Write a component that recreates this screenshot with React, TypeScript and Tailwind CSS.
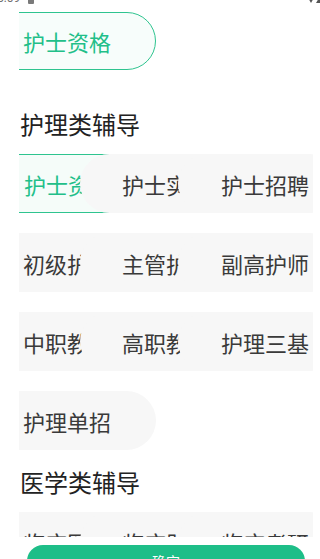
import React from "react";

const FONT = { fontFamily: '"Noto Sans CJK SC", "Noto Sans", sans-serif' };

type CellProps = { text: string; pos: 1 | 2 | 3; selected?: boolean };

function Cell({ text, pos, selected }: CellProps) {
  const posCls =
    pos === 1
      ? "ml-[-40px] w-[177px] pl-[44px]"
      : pos === 2
      ? "ml-[-76px] w-[180px] pl-[42px]"
      : "ml-[-82px] w-[160px] pl-[43px]";
  const look = selected
    ? "border border-[#2ec48f] bg-[#f5fcf9] text-[#22bf89]"
    : "bg-[#f7f7f7] text-[#3a3a3a]";
  return (
    <div
      className={`relative flex h-[59px] shrink-0 items-center rounded-full ${posCls} ${look}`}
    >
      <span className="whitespace-nowrap text-[22px] leading-[30px]">{text}</span>
    </div>
  );
}

function Row({ items, selectedIndex }: { items: string[]; selectedIndex?: number }) {
  return (
    <div className="flex h-[59px] w-[294px] overflow-hidden">
      {items.map((t, i) => (
        <Cell key={i} text={t} pos={(i + 1) as 1 | 2 | 3} selected={selectedIndex === i} />
      ))}
    </div>
  );
}

export default function App() {
  return (
    <div className="h-[559px] w-[320px] overflow-hidden bg-white" style={FONT}>
      {/* status bar */}
      <div className="h-[12px] overflow-hidden">
        <div className="mt-[-9px] flex h-[14px] items-center justify-between">
          <div className="ml-[-3px] flex items-center gap-[8px]">
            <span
              className="text-[12px] leading-[14px] text-[#6f6f6f]"
              style={{ fontFamily: "Roboto, sans-serif" }}
            >
              5:09
            </span>
            <span className="mt-[4px] block h-[8px] w-[6px] rounded-[1px] bg-[#7a7a7a]" />
          </div>
          <svg width="16" height="14" viewBox="0 0 16 14" className="mr-[-2px]">
            <path d="M1 5 L9 5 L5 12 Z" fill="#555" />
            <path d="M16 2 L16 12 L10 12 Z" fill="#555" />
          </svg>
        </div>
      </div>

      <div className="h-[525px] overflow-hidden pl-[19px]">
        {/* top selected pill */}
        <div className="flex h-[58px] w-[294px] overflow-hidden">
          <div className="relative ml-[-40px] flex h-[58px] w-[177px] shrink-0 items-center rounded-full border border-[#2ec48f] bg-[#f7fdfb] pl-[43px] text-[#22bf89]">
            <span className="whitespace-nowrap text-[22px] leading-[30px]">护士资格</span>
          </div>
        </div>

        <div className="mb-[14px] mt-[38px] pl-[1px] text-[24px] leading-[32px] text-[#222]">
          护理类辅导
        </div>

        <div className="flex flex-col gap-[20px]">
          <Row items={["护士资格", "护士实践", "护士招聘"]} selectedIndex={0} />
          <Row items={["初级护师", "主管护师", "副高护师"]} />
          <Row items={["中职教材", "高职教材", "护理三基"]} />
          <div className="flex h-[59px] w-[294px] overflow-hidden">
            <Cell text="护理单招" pos={1} />
          </div>
        </div>

        <div className="mb-[14px] mt-[16px] pl-[1px] text-[24px] leading-[32px] text-[#222]">
          医学类辅导
        </div>

        <Row items={["临床医师", "临床助理", "临床考研"]} />
      </div>

      {/* footer */}
      <div className="bg-white pl-[27px] pr-[15px] pt-[8px]">
        <button className="flex h-[32px] w-full items-center justify-center rounded-full bg-[#1ebe88] text-[14px] text-white">
          确定
        </button>
      </div>
    </div>
  );
}
